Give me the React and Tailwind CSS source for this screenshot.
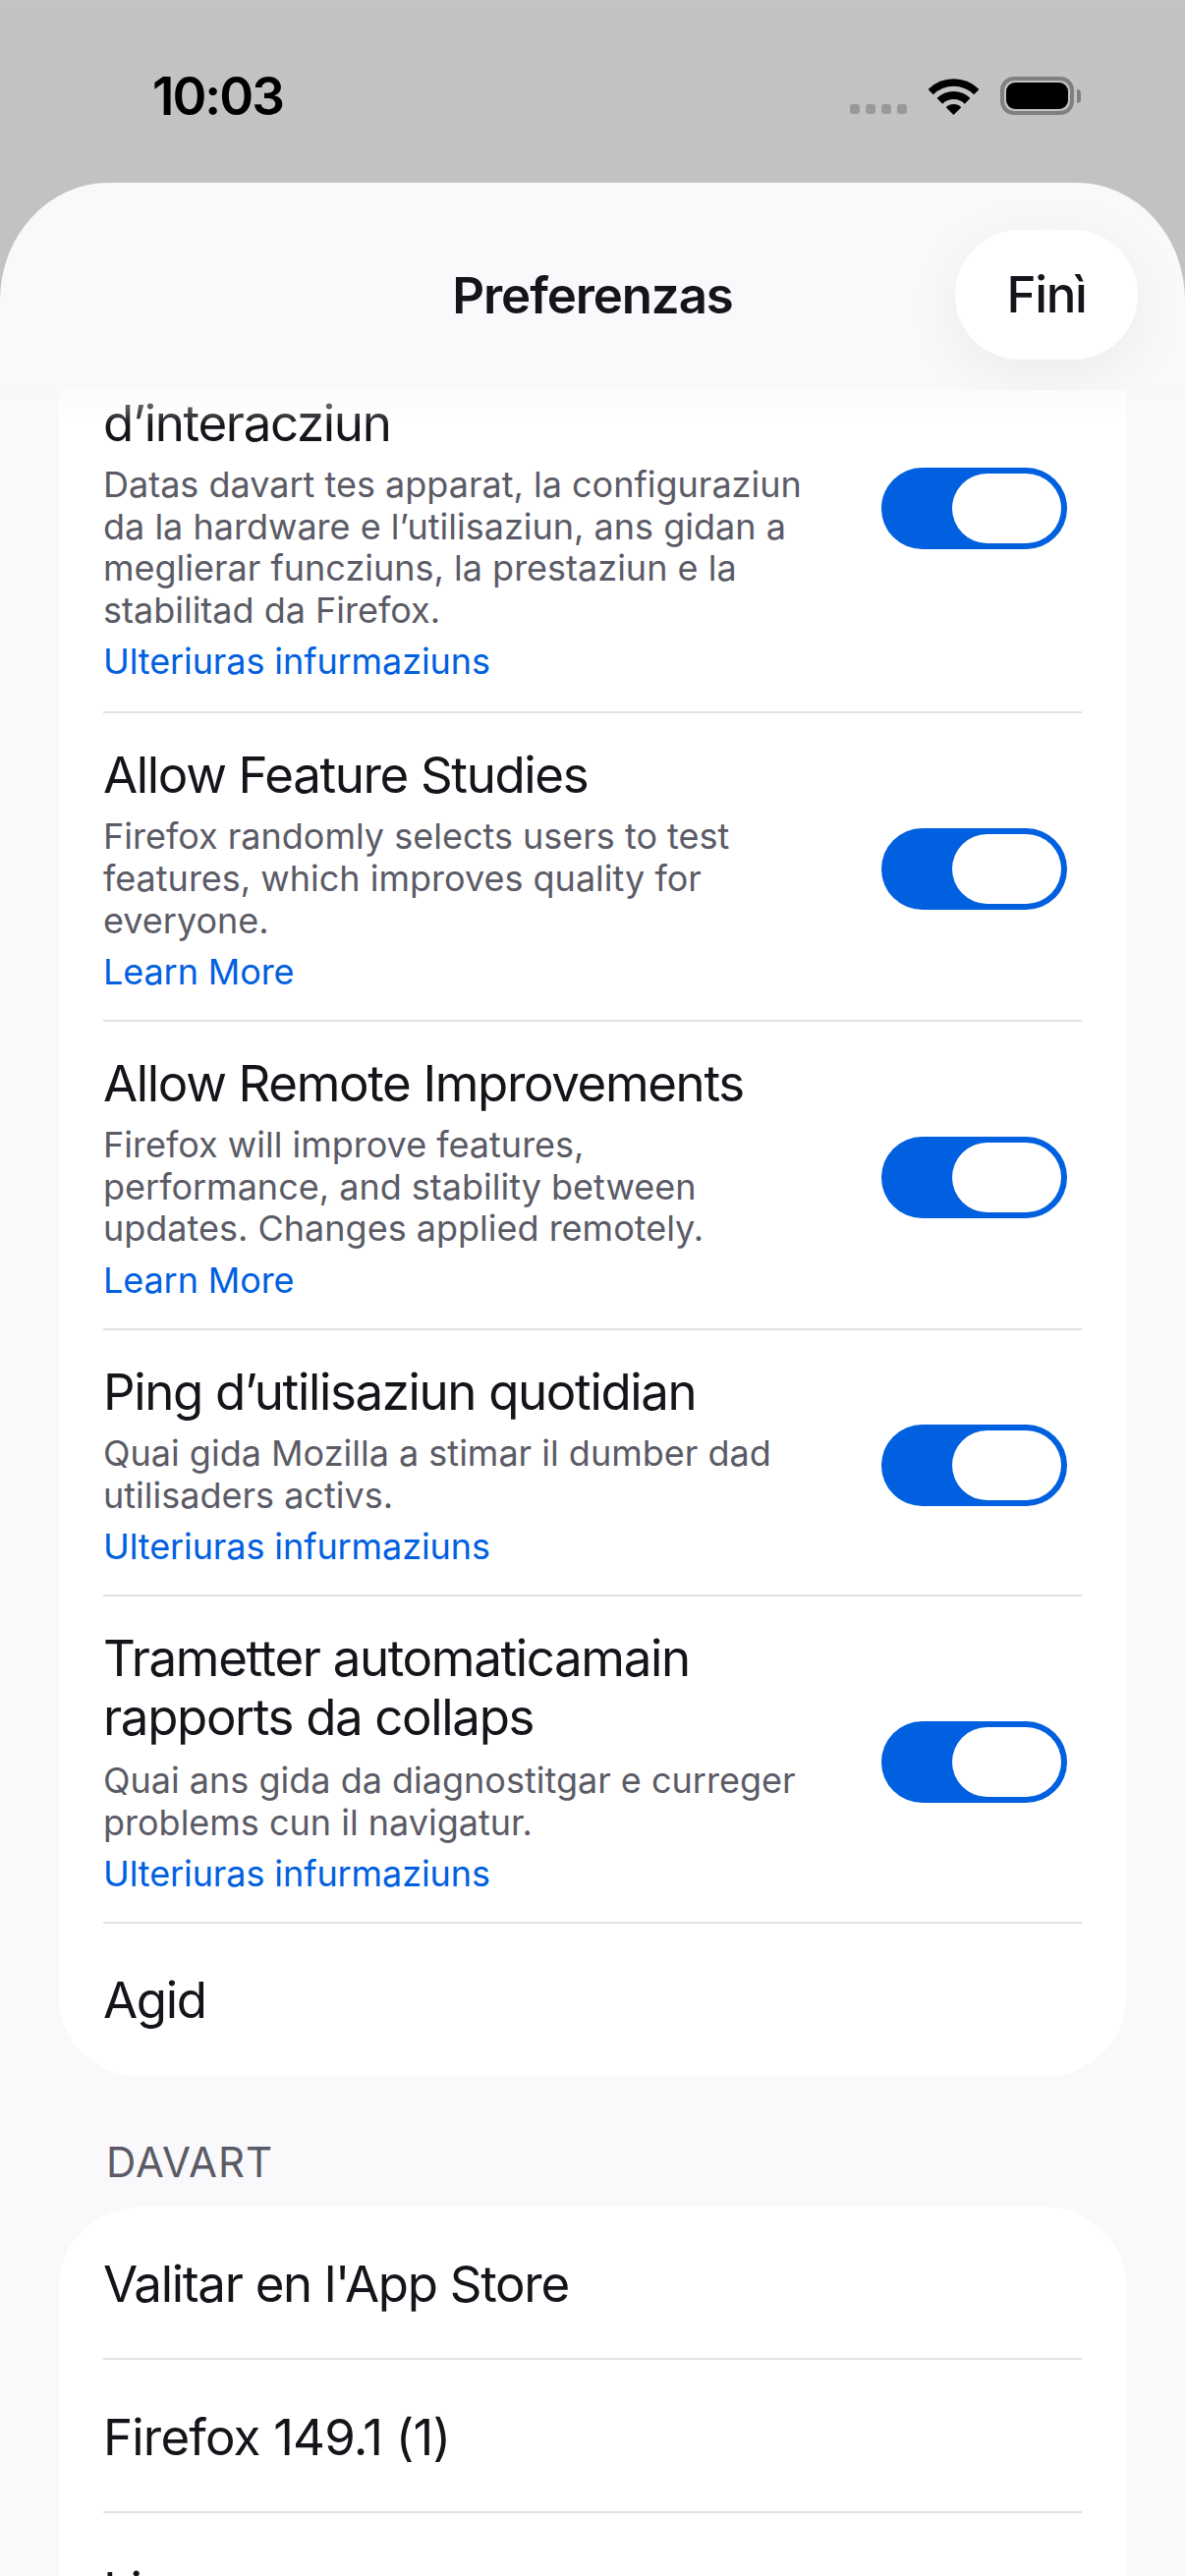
const FONT = 'font-["Inter",sans-serif]';

function Toggle() {
  return (
    <div className="w-[189px] h-[83px] shrink-0 rounded-full bg-[#0060df] flex justify-end items-center pr-[6px]">
      <div className="w-[111px] h-[71px] rounded-full bg-white" />
    </div>
  );
}

function Row({ title, desc, link, gap = "mt-[11px]", pad = "pt-[33px] pb-[23px]" }) {
  return (
    <div className="mx-[45px] border-b-2 border-[#e0e0e6]">
      <div className={`flex items-center justify-between ${pad}`}>
        <div className="w-[740px]">
          {title.map((t, i) => (
            <div key={i} className="h-[60px] text-[51px] leading-[60px] tracking-[-1.35px] text-[#15141a] whitespace-nowrap">{t}</div>
          ))}
          <div className={gap}>
            {desc.map((d) => (
              <div key={d} className="text-[36px] leading-[42.6px] text-[#5b5b66] whitespace-nowrap">{d}</div>
            ))}
          </div>
          <div className="mt-[6px] text-[36px] leading-[51px] text-[#0060df] tracking-[-0.1px]">{link}</div>
        </div>
        <div className="pr-[15px] pb-[5px]"><Toggle /></div>
      </div>
    </div>
  );
}

function Plain({ label, divider = true, track = "tracking-[-1.3px]" }) {
  return (
    <div className={divider ? "mx-[45px] border-b-2 border-[#e0e0e6]" : "mx-[45px]"}>
      <div className={`h-[154px] pt-[4px] flex items-center text-[51px] text-[#15141a] ${track}`}>{label}</div>
    </div>
  );
}

function Wifi() {
  return (
    <svg width="51" height="37" viewBox="0 0 51 37" fill="none">
      <path d="M2.2 13.7A33 33 0 0 1 48.8 13.7" stroke="#000" strokeWidth="7.5" />
      <path d="M11.4 22.9A20 20 0 0 1 39.6 22.9" stroke="#000" strokeWidth="8" />
      <path d="M25.5 37L17.7 29.2A11 11 0 0 1 33.3 29.2Z" fill="#000" />
    </svg>
  );
}

export default function App() {
  return (
    <div className={`${FONT} w-[1206px] h-[2622px] overflow-hidden flex flex-col bg-gradient-to-b from-[#c3c3c5] to-[#bbbbbd]`}>
      <div className="h-[186px] shrink-0 flex justify-between pl-[155px] pr-[106px]">
        <div className="mt-[68px] text-[53px] leading-[60px] font-semibold text-black tracking-[-2px]">10:03</div>
        <div className="mt-[78px] h-[39px] flex items-end">
          <div className="flex gap-[6px] mb-[1px] mr-[22px]">
            {[0, 1, 2, 3].map((i) => (
              <div key={i} className="w-[10px] h-[10px] rounded-[3px] bg-[#999999]" />
            ))}
          </div>
          <Wifi />
          <div className="ml-[22px] w-[75px] h-[39px] rounded-[14px] border-[4px] border-[#808080] p-[2px]">
            <div className="w-full h-full rounded-[9px] bg-black" />
          </div>
          <div className="ml-[3px] mb-[12px] w-[4px] h-[14px] rounded-r-full bg-[#808080]" />
        </div>
      </div>
      <div className="flex-1 min-h-0 rounded-t-[110px_120px] bg-[#f9f9fb] overflow-hidden flex flex-col">
        <div className="h-[211px] shrink-0 relative overflow-hidden flex items-center justify-center pt-[20px]">
          <div className="text-[51px] font-semibold tracking-[-1.1px] text-[#15141a]">Preferenzas</div>
          <div className="absolute right-[48px] top-[48px] w-[186px] h-[132px] rounded-full bg-white shadow-[0_14px_60px_rgba(0,0,0,0.06)] flex items-center justify-center text-[51px] font-medium tracking-[-1.3px] text-[#15141a]">
            Finì
          </div>
        </div>
        <div className="flex-1 min-h-0 overflow-hidden relative">
          <div className="absolute inset-x-0 top-0 h-[36px] bg-gradient-to-b from-[#f9f9fb]/60 to-transparent" />
          <div className="-mt-[89px]">
            <div className="mx-[60px] bg-white rounded-b-[85px_80px]">
              <Row pad="pt-[33px] pb-[25px]" title={["", "d’interacziun"]} desc={["Datas davart tes apparat, la configuraziun", "da la hardware e l’utilisaziun, ans gidan a", "meglierar funcziuns, la prestaziun e la", "stabilitad da Firefox."]} link="Ulteriuras infurmaziuns" />
              <Row title={["Allow Feature Studies"]} desc={["Firefox randomly selects users to test", "features, which improves quality for", "everyone."]} link="Learn More" />
              <Row title={["Allow Remote Improvements"]} desc={["Firefox will improve features,", "performance, and stability between", "updates. Changes applied remotely."]} link="Learn More" />
              <Row title={["Ping d’utilisaziun quotidian"]} desc={["Quai gida Mozilla a stimar il dumber dad", "utilisaders activs."]} link="Ulteriuras infurmaziuns" />
              <Row gap="mt-[13px]" title={["Trametter automaticamain", "rapports da collaps"]} desc={["Quai ans gida da diagnostitgar e curreger", "problems cun il navigatur."]} link="Ulteriuras infurmaziuns" />
              <div className="mx-[45px] h-[156px] flex items-center text-[51px] tracking-[-1.35px] text-[#15141a]">Agid</div>
            </div>
            <div className="mt-[62px] ml-[108px] text-[42px] leading-[50px] tracking-[1px] text-[#5b5b66]">DAVART</div>
            <div className="mt-[20px] mx-[60px] bg-white rounded-t-[85px_80px]">
              <Plain label="Valitar en l'App Store" />
              <Plain label="Firefox 149.1 (1)" track="tracking-[-0.8px]" />
              <Plain label="Licenzas" divider={false} />
            </div>
          </div>
        </div>
      </div>
    </div>
  );
}
